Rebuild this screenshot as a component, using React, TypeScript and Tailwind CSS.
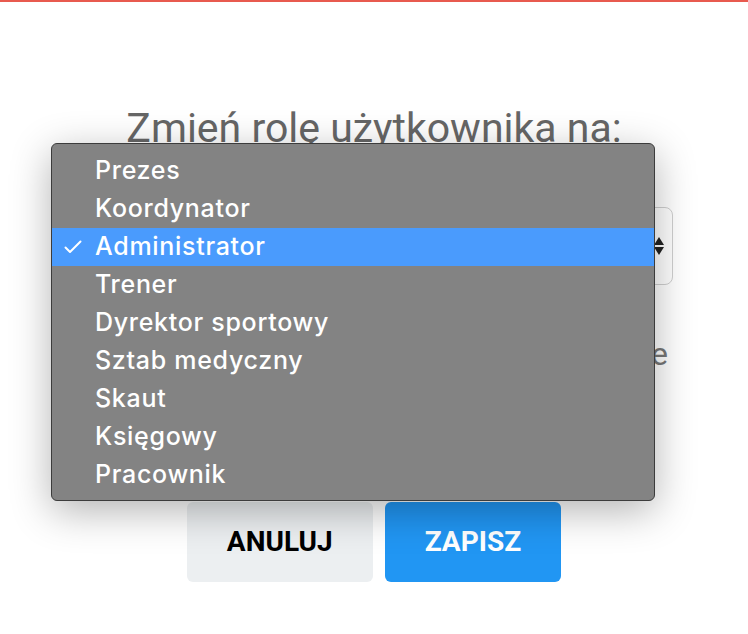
import { useState } from "react";

const roles = [
  "Prezes",
  "Koordynator",
  "Administrator",
  "Trener",
  "Dyrektor sportowy",
  "Sztab medyczny",
  "Skaut",
  "Księgowy",
  "Pracownik",
];

function Check() {
  return (
    <svg width="18" height="14" viewBox="0 0 18 14" fill="none" className="block">
      <path d="M1.5 7.5 L6 12 L16.5 1.5" stroke="white" strokeWidth="2" strokeLinecap="round" strokeLinejoin="round" />
    </svg>
  );
}

function Arrows() {
  return (
    <svg width="10" height="20" viewBox="0 0 10 20" className="block">
      <path d="M5 1 L10 9 L0 9 Z" fill="#222" />
      <path d="M0 11 L10 11 L5 19 Z" fill="#222" />
    </svg>
  );
}

export default function App() {
  const [selected] = useState("Administrator");

  return (
    <div className="relative w-full h-[634px] overflow-hidden bg-white font-['Roboto',sans-serif]">
      <div className="h-[2px] bg-[#e85a4f]" />

      {/* modal body behind the native select popup */}
      <div className="flex flex-col items-center">
        <h1 className="mt-[102px] text-[41px] leading-[48px] text-[#666] whitespace-nowrap">Zmień rolę użytkownika na:</h1>

        <div className="mt-[55px] w-[598px] h-[78px] rounded-lg border border-[#d0d0d0] flex items-center justify-between pl-5 pr-[8px]">
          <span className="text-[28px] text-[#333]">{selected}</span>
          <Arrows />
        </div>

        <p className="mt-[49px] w-[598px] text-right pr-[5px] text-[32px] leading-[40px] text-[#777] whitespace-nowrap">
          Rola określa dostęp w aplikacji na stronie
        </p>

        <div className="mt-[128px] flex gap-3">
          <button className="h-[80px] px-10 rounded-md bg-[#eceff1] text-[28px] font-bold text-black">ANULUJ</button>
          <button className="h-[80px] px-10 rounded-md bg-[#2196f3] text-[28px] font-bold text-white">ZAPISZ</button>
        </div>
      </div>

      {/* open select menu */}
      <div className="absolute left-[51px] top-[143px] w-[604px] h-[358px] rounded-[6px] border border-[#3c3c3c] bg-[#838383] pt-2 shadow-[0_10px_40px_rgba(0,0,0,0.3)] font-['Inter',sans-serif]">
        {roles.map((r) => (
          <div
            key={r}
            className={`relative h-[38px] flex items-center pl-[43px] text-[25px] tracking-[0.7px] font-medium text-white ${r === selected ? "bg-[#4a9bfd]" : ""}`}
          >
            {r === selected && (
              <span className="absolute left-[12px] top-[12px]">
                <Check />
              </span>
            )}
            {r}
          </div>
        ))}
      </div>
    </div>
  );
}
